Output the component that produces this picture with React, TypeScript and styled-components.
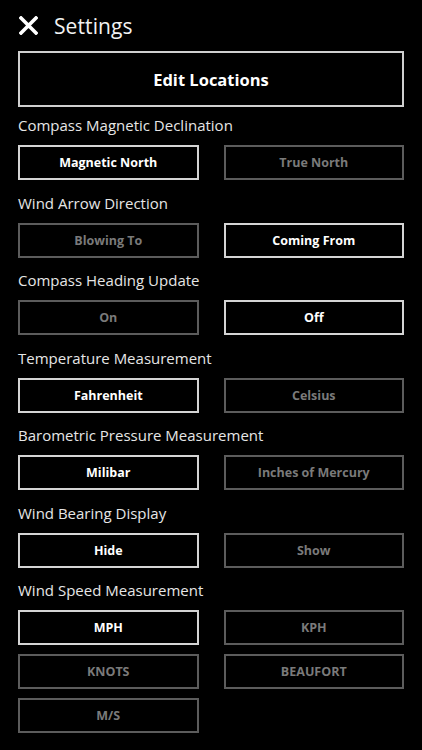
import React, { useState } from 'react';
import styled, { createGlobalStyle } from 'styled-components';

const GlobalStyle = createGlobalStyle`
  html, body {
    margin: 0;
    padding: 0;
    background: #000;
  }
  body {
    font-family: 'Open Sans', 'Liberation Sans', sans-serif;
    color: #fff;
    overflow: hidden;
  }
`;

const Page = styled.div`
  width: 422px;
  height: 750px;
  overflow: hidden;
  background: #000;
  padding: 0 18px;
  box-sizing: border-box;
`;

const Header = styled.div`
  display: flex;
  align-items: center;
  gap: 16px;
  height: 51px;
`;

const CloseButton = styled.button`
  display: flex;
  align-items: center;
  justify-content: center;
  width: 20px;
  height: 20px;
  padding: 0;
  margin: 0;
  border: none;
  background: none;
  cursor: pointer;
`;

const Title = styled.h1`
  margin: 0;
  font-size: 21px;
  font-weight: 400;
  color: #f2f2f2;
  letter-spacing: 0.1px;
`;

const EditButton = styled.button`
  width: 100%;
  height: 56px;
  box-sizing: border-box;
  border: 2px solid #cfcfcf;
  background: #000;
  color: #fff;
  font-family: inherit;
  font-size: 16.5px;
  font-weight: 700;
  cursor: pointer;
`;

const Section = styled.section`
  display: flex;
  flex-direction: column;
  gap: 10px;
  padding-top: 8px;

  & + & {
    padding-top: 12.5px;
  }
`;

const Label = styled.div`
  font-size: 15px;
  line-height: 20px;
  color: #e6e6e6;
`;

const Options = styled.div`
  display: grid;
  grid-template-columns: 1fr 1fr;
  column-gap: 25px;
  row-gap: 9px;
`;

const Option = styled.button<{ $active: boolean }>`
  height: 35px;
  box-sizing: border-box;
  border: 2px solid ${p => (p.$active ? '#d4d4d4' : '#5c5c5c')};
  background: #000;
  color: ${p => (p.$active ? '#fff' : '#7a7a7a')};
  font-family: inherit;
  font-size: 12.5px;
  font-weight: 700;
  padding: 0;
  cursor: pointer;
`;

type Group = { label: string; options: string[]; initial: number };

const groups: Group[] = [
  { label: 'Compass Magnetic Declination', options: ['Magnetic North', 'True North'], initial: 0 },
  { label: 'Wind Arrow Direction', options: ['Blowing To', 'Coming From'], initial: 1 },
  { label: 'Compass Heading Update', options: ['On', 'Off'], initial: 1 },
  { label: 'Temperature Measurement', options: ['Fahrenheit', 'Celsius'], initial: 0 },
  { label: 'Barometric Pressure Measurement', options: ['Milibar', 'Inches of Mercury'], initial: 0 },
  { label: 'Wind Bearing Display', options: ['Hide', 'Show'], initial: 0 },
  { label: 'Wind Speed Measurement', options: ['MPH', 'KPH', 'KNOTS', 'BEAUFORT', 'M/S'], initial: 0 },
  { label: 'Precipitation Measurement', options: ['Inches', 'Millimeters'], initial: 0 },
];

const SettingGroup = ({ group }: { group: Group }) => {
  const [selected, setSelected] = useState(group.initial);
  return (
    <Section>
      <Label>{group.label}</Label>
      <Options>
        {group.options.map((o, i) => (
          <Option key={o} $active={i === selected} onClick={() => setSelected(i)}>
            {o}
          </Option>
        ))}
      </Options>
    </Section>
  );
};

export default function App() {
  return (
    <>
      <GlobalStyle />
      <Page>
        <Header>
          <CloseButton aria-label="Close">
            <svg width="19" height="19" viewBox="0 0 19 19">
              <path d="M2 2 L17 17 M17 2 L2 17" stroke="#fff" strokeWidth="3.6" strokeLinecap="square" />
            </svg>
          </CloseButton>
          <Title>Settings</Title>
        </Header>
        <EditButton>Edit Locations</EditButton>
        {groups.map(g => (
          <SettingGroup key={g.label} group={g} />
        ))}
      </Page>
    </>
  );
}
